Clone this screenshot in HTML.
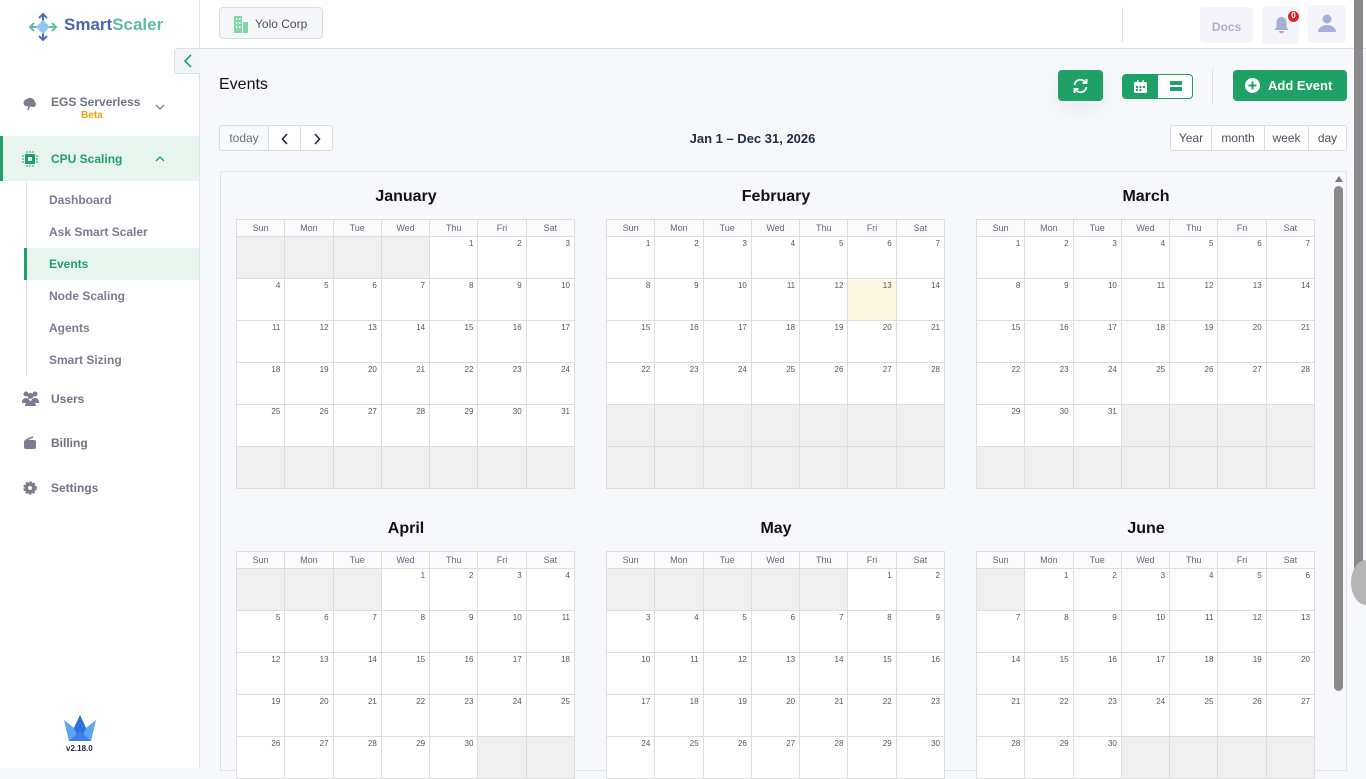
<!DOCTYPE html>
<html><head><meta charset="utf-8"><style>
*{box-sizing:border-box;margin:0;padding:0}
body{width:1366px;height:768px;overflow:hidden;font-family:"Liberation Sans",sans-serif;background:#f6f8fb;position:relative;color:#1f2a44}
.abs{position:absolute}
#side{left:0;top:0;width:200px;height:768px;background:#fff;border-right:1px solid #dfe5ec}
.nav{position:absolute;font-size:12px;font-weight:bold;color:#6f7382}
.sub{position:absolute;left:49px;font-size:12px;color:#7a7e8c;font-weight:bold}
#hdr{left:200px;top:0;width:1166px;height:49px;background:#fff;border-bottom:1px solid #d6dfe9}
.btn{position:absolute;border-radius:4px}
.green{background:#1fa067}
.cal{position:absolute;width:340px}
.cal h3{text-align:center;font-size:16px;font-weight:bold;color:#111;height:36px;line-height:28px}
table{border-collapse:collapse;width:339px;table-layout:fixed;background:#fff}
th{height:17px;font-size:9px;font-weight:normal;color:#667;border:1px solid #ddd;background:#fafbfc}
td{height:42px;border:1px solid #ddd;font-size:8px;color:#555;text-align:right;vertical-align:top;padding:2px 4px 0 0}
td.g{background:#f0f0f0}
td.t{background:#fcf8e3}
.vb{position:absolute;border:1px solid #d6dde6;background:#fff;font-size:12px;color:#4a4f63;text-align:center;line-height:24px}
</style></head><body>
<div id="side" class="abs">
 <svg class="abs" style="left:28px;top:12px" width="30" height="30" viewBox="0 0 30 30"><g stroke="#4a6fb5" stroke-width="2" fill="none"><path d="M15 2v26M11 6l4-4 4 4M11 24l4 4 4-4"/></g><g stroke="#5cbf9c" stroke-width="2" fill="none"><path d="M2 15h26M6 11l-4 4 4 4M24 11l4 4-4 4"/></g><rect x="10" y="10" width="10" height="10" fill="#8fc7ee" transform="rotate(45 15 15)"/></svg>
 <div class="abs" style="left:64px;top:15px;font-size:17px;font-weight:bold;color:#4a66b0">Smart<span style="color:#5cbf9c">Scaler</span></div>
 <div class="nav" style="left:22px;top:96px;width:14px;height:14px"><svg width="16" height="16" viewBox="0 0 16 16"><path d="M3 10a4 4 0 0 1 2-7 5 5 0 0 1 8 3 3 3 0 0 1-1 5z" fill="#7a7e8c"/><path d="M8 8l-2 6" stroke="#7a7e8c" stroke-width="1.5"/></svg></div>
 <div class="nav" style="left:51px;top:95px">EGS Serverless</div>
 <div class="abs" style="left:81px;top:110px;font-size:10px;font-weight:bold;color:#f59e0b">Beta</div>
 <svg class="abs" style="left:155px;top:104px" width="10" height="6" viewBox="0 0 10 6"><path d="M1 1l4 4 4-4" stroke="#7a7e8c" stroke-width="1.3" fill="none"/></svg>
 <div class="abs" style="left:0;top:136px;width:199px;height:45px;background:#e8f5ee;border-left:3px solid #1fa067"></div>
 <svg class="abs" style="left:22px;top:151px" width="16" height="16" viewBox="0 0 16 16"><rect x="3" y="3" width="10" height="10" fill="#1fa067"/><rect x="6" y="6" width="4" height="4" fill="#e8f5ee"/><g stroke="#1fa067"><path d="M5 0v16M8 0v16M11 0v16M0 5h16M0 8h16M0 11h16" stroke-dasharray="2 12"/></g></svg>
 <div class="nav" style="left:51px;top:152px;color:#1fa067">CPU Scaling</div>
 <svg class="abs" style="left:155px;top:156px" width="10" height="6" viewBox="0 0 10 6"><path d="M1 5l4-4 4 4" stroke="#1fa067" stroke-width="1.3" fill="none"/></svg>
 <div class="abs" style="left:26px;top:182px;width:1px;height:194px;background:#dfe3e8"></div>
 <div class="sub" style="top:193px">Dashboard</div>
 <div class="sub" style="top:225px">Ask Smart Scaler</div>
 <div class="abs" style="left:24px;top:248px;width:175px;height:32px;background:#e8f5ee;border-left:3px solid #1fa067"></div>
 <div class="sub" style="top:257px;color:#1fa067">Events</div>
 <div class="sub" style="top:289px">Node Scaling</div>
 <div class="sub" style="top:321px">Agents</div>
 <div class="sub" style="top:353px">Smart Sizing</div>
 <svg class="abs" style="left:22px;top:391px" width="17" height="15" viewBox="0 0 17 15"><circle cx="4" cy="3" r="2.5" fill="#7a7e8c"/><circle cx="13" cy="3" r="2.5" fill="#7a7e8c"/><circle cx="8.5" cy="5" r="3" fill="#7a7e8c"/><path d="M0 11a4 4 0 0 1 8 0v1H0zM9 11a4 4 0 0 1 8 0v1H9z M3 15a5.5 5 0 0 1 11 0z" fill="#7a7e8c"/></svg>
 <div class="nav" style="left:51px;top:392px">Users</div>
 <svg class="abs" style="left:23px;top:436px" width="14" height="14" viewBox="0 0 14 14"><rect x="1" y="4" width="12" height="9" rx="2" fill="#7a7e8c"/><path d="M3 4l7-3" stroke="#7a7e8c" stroke-width="1.5"/></svg>
 <div class="nav" style="left:51px;top:436px">Billing</div>
 <svg class="abs" style="left:23px;top:481px" width="14" height="14" viewBox="0 0 14 14"><circle cx="7" cy="7" r="5.5" fill="#7a7e8c" stroke="#7a7e8c" stroke-width="2.5" stroke-dasharray="2.2 1.4"/><circle cx="7" cy="7" r="2" fill="#fff"/></svg>
 <div class="nav" style="left:51px;top:481px">Settings</div>
 <svg class="abs" style="left:64px;top:715px" width="32" height="26" viewBox="0 0 32 26"><path d="M0 5l10 8 6-13 6 13 10-8-5 21H5z" fill="#5aa6f5"/><path d="M16 0l6 13-6 13-6-13z" fill="#2f6fe0"/><path d="M5 26l11-10 11 10z" fill="#3b7ff0"/></svg>
 <div class="abs" style="left:66px;top:744px;font-size:8px;color:#1f2a44;font-weight:bold">v2.18.0</div>
</div>
<div class="abs" style="left:174px;top:48px;width:26px;height:26px;background:#f3f6f9;border:1px solid #d6dfe9;border-right:none;border-radius:4px 0 0 4px;display:flex;align-items:center;justify-content:center"><svg width="10" height="14" viewBox="0 0 10 14"><path d="M8 1L2 7l6 6" stroke="#1fa067" stroke-width="1.6" fill="none"/></svg></div>
<div id="hdr" class="abs">
 <div class="btn" style="left:19px;top:7px;width:104px;height:32px;background:#f5f7fa;border:1px solid #d6dde6">
  <svg class="abs" style="left:13px;top:7px" width="16" height="18" viewBox="0 0 16 18"><rect x="1" y="1" width="8" height="17" fill="#7fd6a8"/><rect x="10" y="7" width="5" height="11" fill="#7fd6a8"/><g fill="#f5f7fa"><rect x="3" y="3" width="1.5" height="2"/><rect x="6" y="3" width="1.5" height="2"/><rect x="3" y="7" width="1.5" height="2"/><rect x="6" y="7" width="1.5" height="2"/><rect x="3" y="11" width="1.5" height="2"/><rect x="6" y="11" width="1.5" height="2"/></g></svg>
  <div class="abs" style="left:35px;top:9px;font-size:12px;color:#4a4f63">Yolo Corp</div>
 </div>
 <div class="abs" style="left:922px;top:7px;width:1px;height:35px;background:#d6dfe9"></div>
 <div class="btn" style="left:1000px;top:7px;width:53px;height:36px;background:#f3f5fa;font-size:12px;color:#a9aed6;text-align:center;line-height:40px;font-weight:bold">Docs</div>
 <div class="btn" style="left:1062px;top:6px;width:37px;height:38px;background:#f3f5fa"><svg class="abs" style="left:11px;top:10px" width="17" height="18" viewBox="0 0 17 18"><path d="M8.5 1a5 5 0 0 1 5 5v5l2 3H1.5l2-3V6a5 5 0 0 1 5-5zM6 15h5a2.5 2.5 0 0 1-5 0z" fill="#a9aed6"/></svg><div class="abs" style="left:25px;top:4px;width:13px;height:13px;border-radius:50%;background:#e02424;border:1.5px solid #fff;color:#fff;font-size:8px;font-weight:bold;text-align:center;line-height:10px">0</div></div>
 <div class="btn" style="left:1108px;top:5px;width:38px;height:38px;background:#f3f5fa"><svg class="abs" style="left:10px;top:9px" width="18" height="18" viewBox="0 0 18 18"><circle cx="9" cy="5" r="4.5" fill="#a9aed6"/><path d="M0 18a9 7 0 0 1 18 0z" fill="#a9aed6"/></svg></div>
</div>
<div class="abs" style="left:219px;top:76px;font-size:16px;color:#111;font-weight:500">Events</div>
<div class="btn green" style="left:1058px;top:70px;width:45px;height:31px;box-shadow:0 8px 20px rgba(0,0,0,.06)"><svg class="abs" style="left:14px;top:8px" width="17" height="16" viewBox="0 0 17 16"><path d="M2.5 7a6 6 0 0 1 11-2.5M14.5 9a6 6 0 0 1-11 2.5" stroke="#fff" stroke-width="1.8" fill="none"/><path d="M14.5 1v4h-4M2.5 15v-4h4" stroke="#fff" stroke-width="1.8" fill="none"/></svg></div>
<div class="btn" style="left:1122px;top:74px;width:71px;height:25px;border:1px solid #1fa067;background:#fff;overflow:hidden"><div class="abs green" style="left:0;top:0;width:35px;height:23px"><svg class="abs" style="left:11px;top:5px" width="13" height="13" viewBox="0 0 13 13"><rect x="0" y="2" width="13" height="11" rx="1.5" fill="#fff"/><rect x="3" y="0" width="1.5" height="3" fill="#fff"/><rect x="8.5" y="0" width="1.5" height="3" fill="#fff"/><g fill="#1fa067"><rect x="2" y="6" width="2" height="2"/><rect x="5.5" y="6" width="2" height="2"/><rect x="9" y="6" width="2" height="2"/><rect x="2" y="9" width="2" height="2"/><rect x="5.5" y="9" width="2" height="2"/></g></svg></div><div class="abs" style="left:47px;top:6px;width:12px;height:4px;background:#1fa067"></div><div class="abs" style="left:47px;top:12px;width:12px;height:4px;background:#1fa067"></div></div>
<div class="abs" style="left:1212px;top:68px;width:1px;height:36px;background:#dde3ea"></div>
<div class="btn green" style="left:1233px;top:70px;width:114px;height:31px"><svg class="abs" style="left:12px;top:8px" width="15" height="15" viewBox="0 0 15 15"><circle cx="7.5" cy="7.5" r="7.5" fill="#fff"/><path d="M7.5 3.5v8M3.5 7.5h8" stroke="#1fa067" stroke-width="2"/></svg><div class="abs" style="left:35px;top:8px;color:#fff;font-size:13px;font-weight:bold">Add Event</div></div>
<div class="vb" style="left:219px;top:125px;width:50px;height:26px;color:#6b7080;font-size:12px;border-radius:3px 0 0 3px;background:#f8f9fb">today</div>
<div class="vb" style="left:268px;top:125px;width:33px;height:26px"><svg width="8" height="12" viewBox="0 0 8 12" style="margin-top:7px"><path d="M6 1L1.5 6 6 11" stroke="#1f2a44" stroke-width="1.6" fill="none"/></svg></div>
<div class="vb" style="left:300px;top:125px;width:33px;height:26px;border-radius:0 3px 3px 0"><svg width="8" height="12" viewBox="0 0 8 12" style="margin-top:7px"><path d="M2 1l4.5 5L2 11" stroke="#1f2a44" stroke-width="1.6" fill="none"/></svg></div>
<div class="abs" style="left:600px;top:131px;width:305px;text-align:center;font-size:13px;font-weight:bold;color:#1f2a44">Jan 1 – Dec 31, 2026</div>
<div class="vb" style="left:1170px;top:125px;width:42px;height:26px;border-radius:3px 0 0 3px">Year</div>
<div class="vb" style="left:1211px;top:125px;width:54px;height:26px">month</div>
<div class="vb" style="left:1264px;top:125px;width:45px;height:26px">week</div>
<div class="vb" style="left:1308px;top:125px;width:39px;height:26px;border-radius:0 3px 3px 0">day</div>
<div class="abs" style="left:220px;top:171px;width:1127px;height:600px;border:1px solid #dde3ea;background:#f7f8fb"></div>
<div class="abs" style="left:1335px;top:176px;width:0;height:0;border-left:4px solid transparent;border-right:4px solid transparent;border-bottom:6px solid #777"></div>
<div class="abs" style="left:1334px;top:186px;width:9px;height:505px;border-radius:5px;background:#8a8a8a"></div>
<div class="abs" style="left:1354px;top:0;width:9px;height:572px;border-radius:0 0 5px 5px;background:#8a8a8a"></div>
<div class="abs" style="left:1351px;top:560px;width:30px;height:45px;border-radius:50%;background:#b5b5b5"></div>

<div class="cal" style="left:236px;top:183px"><h3>January</h3><table><tr><th>Sun</th><th>Mon</th><th>Tue</th><th>Wed</th><th>Thu</th><th>Fri</th><th>Sat</th></tr>
<tr><td class=g></td><td class=g></td><td class=g></td><td class=g></td><td>1</td><td>2</td><td>3</td></tr>
<tr><td>4</td><td>5</td><td>6</td><td>7</td><td>8</td><td>9</td><td>10</td></tr>
<tr><td>11</td><td>12</td><td>13</td><td>14</td><td>15</td><td>16</td><td>17</td></tr>
<tr><td>18</td><td>19</td><td>20</td><td>21</td><td>22</td><td>23</td><td>24</td></tr>
<tr><td>25</td><td>26</td><td>27</td><td>28</td><td>29</td><td>30</td><td>31</td></tr>
<tr><td class=g></td><td class=g></td><td class=g></td><td class=g></td><td class=g></td><td class=g></td><td class=g></td></tr></table></div>

<div class="cal" style="left:606px;top:183px"><h3>February</h3><table><tr><th>Sun</th><th>Mon</th><th>Tue</th><th>Wed</th><th>Thu</th><th>Fri</th><th>Sat</th></tr>
<tr><td>1</td><td>2</td><td>3</td><td>4</td><td>5</td><td>6</td><td>7</td></tr>
<tr><td>8</td><td>9</td><td>10</td><td>11</td><td>12</td><td class=t>13</td><td>14</td></tr>
<tr><td>15</td><td>16</td><td>17</td><td>18</td><td>19</td><td>20</td><td>21</td></tr>
<tr><td>22</td><td>23</td><td>24</td><td>25</td><td>26</td><td>27</td><td>28</td></tr>
<tr><td class=g></td><td class=g></td><td class=g></td><td class=g></td><td class=g></td><td class=g></td><td class=g></td></tr>
<tr><td class=g></td><td class=g></td><td class=g></td><td class=g></td><td class=g></td><td class=g></td><td class=g></td></tr></table></div>

<div class="cal" style="left:976px;top:183px"><h3>March</h3><table><tr><th>Sun</th><th>Mon</th><th>Tue</th><th>Wed</th><th>Thu</th><th>Fri</th><th>Sat</th></tr>
<tr><td>1</td><td>2</td><td>3</td><td>4</td><td>5</td><td>6</td><td>7</td></tr>
<tr><td>8</td><td>9</td><td>10</td><td>11</td><td>12</td><td>13</td><td>14</td></tr>
<tr><td>15</td><td>16</td><td>17</td><td>18</td><td>19</td><td>20</td><td>21</td></tr>
<tr><td>22</td><td>23</td><td>24</td><td>25</td><td>26</td><td>27</td><td>28</td></tr>
<tr><td>29</td><td>30</td><td>31</td><td class=g></td><td class=g></td><td class=g></td><td class=g></td></tr>
<tr><td class=g></td><td class=g></td><td class=g></td><td class=g></td><td class=g></td><td class=g></td><td class=g></td></tr></table></div>

<div class="cal" style="left:236px;top:515px"><h3>April</h3><table><tr><th>Sun</th><th>Mon</th><th>Tue</th><th>Wed</th><th>Thu</th><th>Fri</th><th>Sat</th></tr>
<tr><td class=g></td><td class=g></td><td class=g></td><td>1</td><td>2</td><td>3</td><td>4</td></tr>
<tr><td>5</td><td>6</td><td>7</td><td>8</td><td>9</td><td>10</td><td>11</td></tr>
<tr><td>12</td><td>13</td><td>14</td><td>15</td><td>16</td><td>17</td><td>18</td></tr>
<tr><td>19</td><td>20</td><td>21</td><td>22</td><td>23</td><td>24</td><td>25</td></tr>
<tr><td>26</td><td>27</td><td>28</td><td>29</td><td>30</td><td class=g></td><td class=g></td></tr></table></div>

<div class="cal" style="left:606px;top:515px"><h3>May</h3><table><tr><th>Sun</th><th>Mon</th><th>Tue</th><th>Wed</th><th>Thu</th><th>Fri</th><th>Sat</th></tr>
<tr><td class=g></td><td class=g></td><td class=g></td><td class=g></td><td class=g></td><td>1</td><td>2</td></tr>
<tr><td>3</td><td>4</td><td>5</td><td>6</td><td>7</td><td>8</td><td>9</td></tr>
<tr><td>10</td><td>11</td><td>12</td><td>13</td><td>14</td><td>15</td><td>16</td></tr>
<tr><td>17</td><td>18</td><td>19</td><td>20</td><td>21</td><td>22</td><td>23</td></tr>
<tr><td>24</td><td>25</td><td>26</td><td>27</td><td>28</td><td>29</td><td>30</td></tr></table></div>

<div class="cal" style="left:976px;top:515px"><h3>June</h3><table><tr><th>Sun</th><th>Mon</th><th>Tue</th><th>Wed</th><th>Thu</th><th>Fri</th><th>Sat</th></tr>
<tr><td class=g></td><td>1</td><td>2</td><td>3</td><td>4</td><td>5</td><td>6</td></tr>
<tr><td>7</td><td>8</td><td>9</td><td>10</td><td>11</td><td>12</td><td>13</td></tr>
<tr><td>14</td><td>15</td><td>16</td><td>17</td><td>18</td><td>19</td><td>20</td></tr>
<tr><td>21</td><td>22</td><td>23</td><td>24</td><td>25</td><td>26</td><td>27</td></tr>
<tr><td>28</td><td>29</td><td>30</td><td class=g></td><td class=g></td><td class=g></td><td class=g></td></tr></table></div>
</body></html>
